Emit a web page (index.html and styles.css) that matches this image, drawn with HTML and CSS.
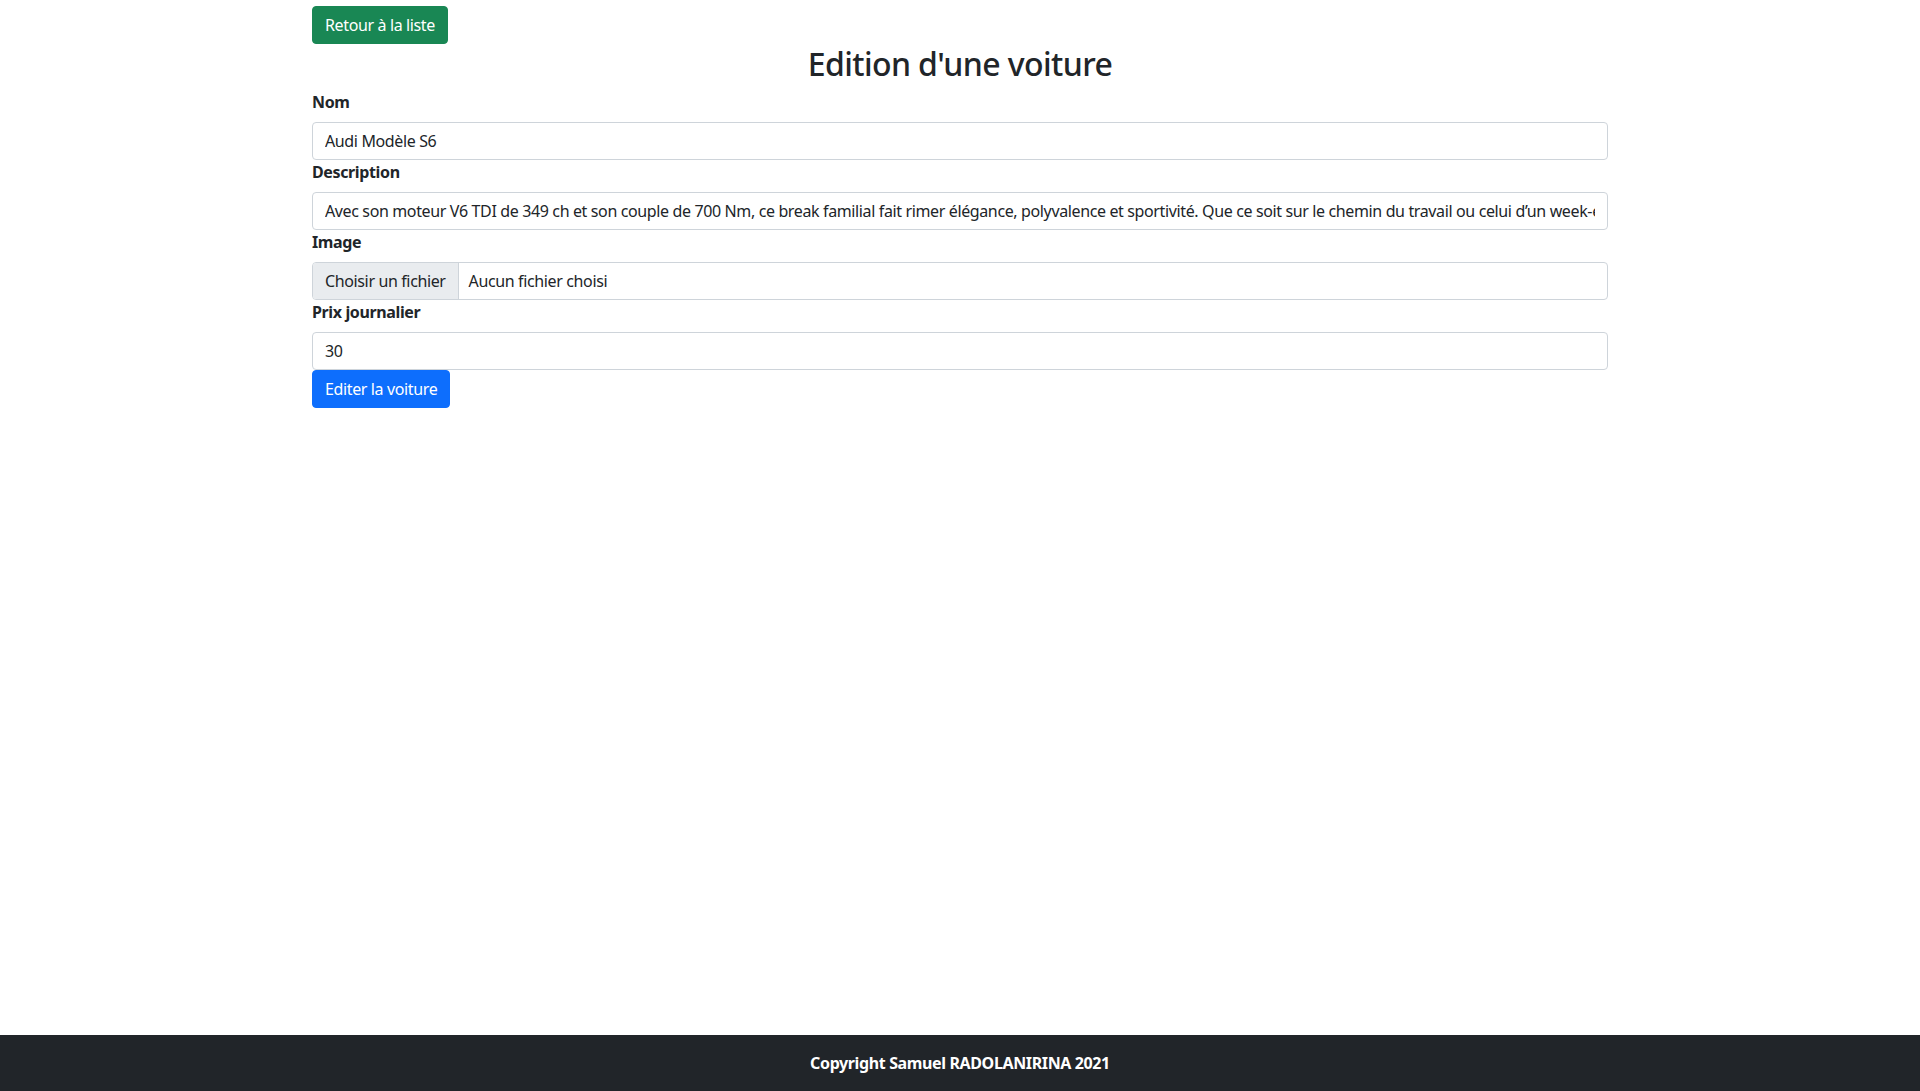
FILE: index.html
```html
<!DOCTYPE html>
<html lang="fr">
<head>
<meta charset="utf-8">
<title>Edition d'une voiture</title>
<link rel="stylesheet" href="styles.css">
</head>
<body>
<main class="container">
  <a class="btn btn-success back-btn" href="#">Retour à la liste</a>
  <h2 class="title">Edition d'une voiture</h2>
  <form class="form">
    <label class="form-label" for="nom">Nom</label>
    <input class="form-control" id="nom" type="text" value="Audi Modèle S6">
    <label class="form-label" for="desc">Description</label>
    <input class="form-control" id="desc" type="text" value="Avec son moteur V6 TDI de 349 ch et son couple de 700 Nm, ce break familial fait rimer élégance, polyvalence et sportivité. Que ce soit sur le chemin du travail ou celui d’un week-end en famille, l’Audi S6 Avant séduit.">
    <label class="form-label">Image</label>
    <div class="file-control">
      <span class="file-btn">Choisir un fichier</span>
      <span class="file-name">Aucun fichier choisi</span>
    </div>
    <label class="form-label" for="prix">Prix journalier</label>
    <input class="form-control" id="prix" type="text" value="30">
    <div><button class="btn btn-primary" type="button">Editer la voiture</button></div>
  </form>
</main>
<footer class="footer">Copyright Samuel RADOLANIRINA 2021</footer>
</body>
</html>
```

FILE: styles.css
```css
* { box-sizing: border-box; }
html, body { margin: 0; padding: 0; }
body {
  font-family: "Segoe UI", "Noto Sans", "Open Sans", sans-serif;
  font-size: 16px;
  line-height: 1.5;
  letter-spacing: -0.37px;
  color: #212529;
  background: #fff;
  min-height: 100vh;
  display: flex;
  flex-direction: column;
}
.container {
  width: 1320px;
  margin: 0 auto;
  padding: 6px 12px 0;
  flex: 1;
  display: flex;
  flex-direction: column;
  align-items: stretch;
}
.btn {
  display: inline-block;
  padding: 6px 12px;
  font-family: inherit;
  font-size: 16px;
  line-height: 24px;
  letter-spacing: inherit;
  color: #fff;
  border: 1px solid transparent;
  border-radius: 4px;
  text-decoration: none;
  cursor: pointer;
}
.btn-success { background: #198754; border-color: #198754; }
.btn-primary { background: #0d6efd; border-color: #0d6efd; }
.back-btn { align-self: flex-start; }
.title {
  margin: 1px 0 7px;
  text-align: center;
  font-size: 32px;
  font-weight: 500;
  line-height: 1.2;
  letter-spacing: -0.6px;
}
.form { display: flex; flex-direction: column; }
.form-label {
  display: block;
  font-weight: 700;
  margin-bottom: 8px;
  line-height: 24px;
}
.form-control {
  display: block;
  width: 100%;
  height: 38px;
  padding: 6px 12px;
  font-family: inherit;
  font-size: 16px;
  line-height: 24px;
  letter-spacing: inherit;
  color: #212529;
  background: #fff;
  border: 1px solid #ced4da;
  border-radius: 4px;
  outline: none;
}
.file-control {
  display: flex;
  height: 38px;
  border: 1px solid #ced4da;
  border-radius: 4px;
  overflow: hidden;
  line-height: 24px;
}
.file-btn {
  padding: 6px 12px;
  background: #e9ecef;
  border-right: 1px solid #ced4da;
}
.file-name { padding: 6px 10px; }
.footer {
  background: #212529;
  color: #fff;
  font-weight: 700;
  text-align: center;
  padding: 16px 0;
  line-height: 24px;
}
```
